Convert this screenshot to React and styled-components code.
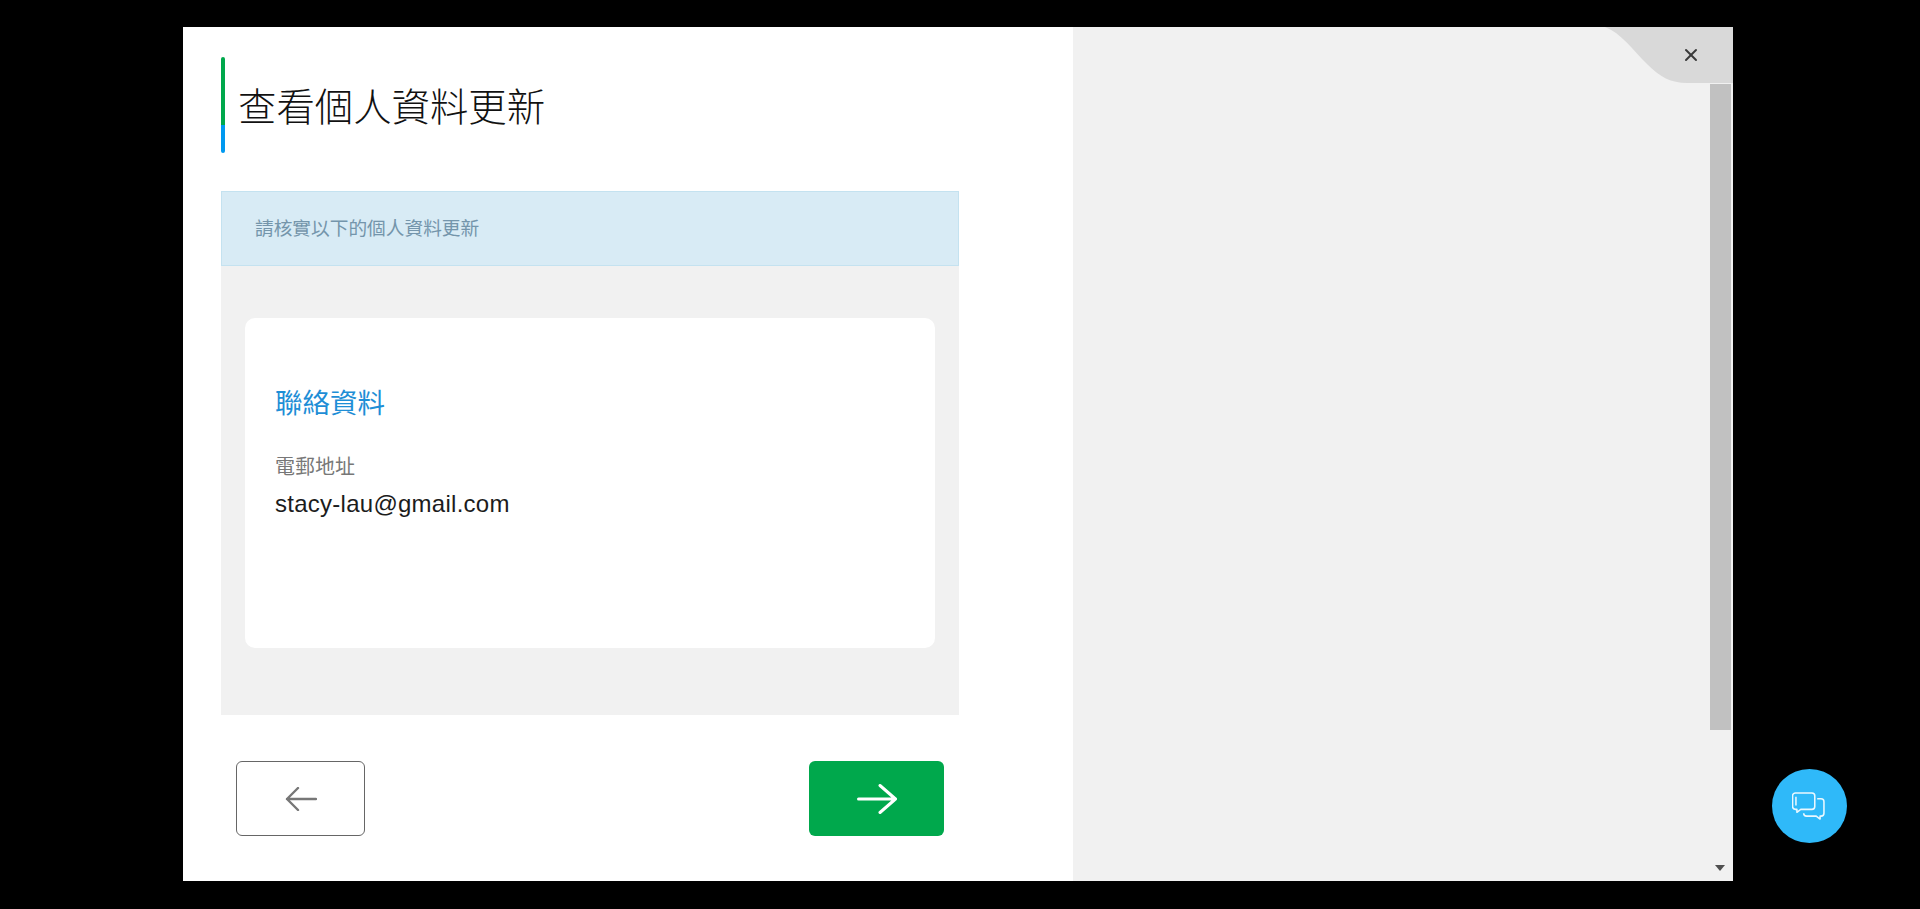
import styled, { createGlobalStyle } from 'styled-components';
import { X } from 'lucide-react';

const GlobalStyle = createGlobalStyle`
    html, body {
        margin: 0;
        padding: 0;
        height: 100%;
        background: #000;
        overflow: hidden;
        font-family: "Liberation Sans", "Noto Sans CJK TC", sans-serif;
    }
`;

const Overlay = styled.div`
    height: 909px;
    padding: 27px 187px 28px 183px;
    box-sizing: border-box;
    position: relative;
`;

const Modal = styled.div`
    height: 854px;
    display: flex;
    position: relative;
    background: #f1f1f1;
`;

const LeftPane = styled.main`
    width: 890px;
    background: #fff;
    padding: 30px 114px 0 38px;
    box-sizing: border-box;
`;

const RightPane = styled.aside`
    flex: 1;
    display: flex;
    justify-content: flex-end;
    padding-right: 2px;
`;

const TitleRow = styled.header`
    height: 96px;
    display: flex;
    align-items: center;
    padding: 0 0 3px 17px;
    box-sizing: border-box;
    position: relative;
    margin-bottom: 38px;
    &::before {
        content: "";
        position: absolute;
        left: 0;
        top: 0;
        width: 4px;
        height: 96px;
        border-radius: 2px;
        background: linear-gradient(#00a84c 0 68px, #0099f0 68px);
    }
`;

const Title = styled.h1`
    margin: 0;
    font-size: 38.4px;
    font-weight: 300;
    color: #111;
`;

const Notice = styled.div`
    height: 75px;
    box-sizing: border-box;
    background: #d8ebf5;
    border: 1px solid #c4e2f0;
    padding: 0 0 4px 33px;
    display: flex;
    align-items: center;
    font-size: 18.7px;
    color: #7495ab;
`;

const GreyPanel = styled.section`
    height: 449px;
    box-sizing: border-box;
    background: #f1f1f1;
    padding: 52px 24px 0;
`;

const Card = styled.div`
    height: 330px;
    box-sizing: border-box;
    background: #fff;
    border-radius: 10px;
    padding: 66px 30px 0;
`;

const CardTitle = styled.h2`
    margin: 0 0 28px;
    font-size: 27.5px;
    line-height: 40px;
    font-weight: 400;
    color: #1e8ed6;
`;

const FieldLabel = styled.div`
    font-size: 20px;
    line-height: 30px;
    color: #777;
`;

const FieldValue = styled.div`
    font-size: 24px;
    line-height: 44px;
    letter-spacing: 0.26px;
    color: #1c1c1c;
`;

const Actions = styled.div`
    display: flex;
    justify-content: space-between;
    padding: 46px 15px 0;
`;

const NavButton = styled.button`
    width: ${p => (p.$primary ? '135px' : '129px')};
    height: 75px;
    box-sizing: border-box;
    padding: 0;
    display: flex;
    align-items: center;
    justify-content: center;
    border-radius: 6px;
    border: ${p => (p.$primary ? 'none' : '1px solid #666')};
    background: ${p => (p.$primary ? '#00a84c' : '#fff')};
    color: ${p => (p.$primary ? '#fff' : '#777')};
`;

const Scrollbar = styled.div`
    width: 21px;
    position: relative;
`;

const Thumb = styled.div`
    height: 646px;
    margin-top: 57px;
    background: #c1c1c1;
`;

const ScrollArrow = styled.div`
    position: absolute;
    left: 5px;
    bottom: 10px;
    width: 0;
    height: 0;
    border-left: 5.5px solid transparent;
    border-right: 5.5px solid transparent;
    border-top: 6px solid #505050;
`;

const CloseCorner = styled.div`
    position: absolute;
    top: 0;
    right: 0;
    width: 128px;
    height: 56px;
    color: #3a3a3a;
    display: flex;
    align-items: center;
    justify-content: flex-end;
    padding-right: 32px;
    box-sizing: border-box;
    & > svg:first-child {
        position: absolute;
        inset: 0;
    }
    & > svg:last-child {
        position: relative;
    }
`;

const ChatButton = styled.button`
    position: absolute;
    left: 1772px;
    top: 769px;
    width: 75px;
    height: 74px;
    border-radius: 50%;
    border: none;
    padding: 0 2px 0 0;
    background: #2fb9f9;
    display: flex;
    align-items: center;
    justify-content: center;
`;

function ArrowLeft() {
    return (
        <svg width="32" height="24" viewBox="0 0 32 24" fill="none" stroke="currentColor" strokeWidth="2.4" strokeLinecap="round" strokeLinejoin="round">
            <path d="M31 12H2M13 1L2 12l11 11" />
        </svg>
    );
}

function ArrowRight() {
    return (
        <svg width="40" height="30" viewBox="0 0 40 30" fill="none" stroke="currentColor" strokeWidth="3" strokeLinecap="round" strokeLinejoin="round">
            <path d="M1.5 15h37M23 1.5L38.500 15 23 28.500" />
        </svg>
    );
}

function ChatIcon() {
    return (
        <svg width="33" height="28" viewBox="0 0 34 29" fill="none" stroke="#fff" strokeOpacity="0.9" strokeWidth="1.6" strokeLinejoin="round">
            <path d="M3.500 1h17a3 3 0 0 1 3 3v11a3 3 0 0 1-3 3H9l-4 3v-3H3.500a3 3 0 0 1-3-3V4a3 3 0 0 1 3-3z" />
            <path d="M26 7h4a3 3 0 0 1 3 3v12a3 3 0 0 1-3 3h-1v3l-4-3H15a3 3 0 0 1-3-3" />
            <path d="M4 5v9" />
        </svg>
    );
}

export default function App() {
    return (
        <>
            <GlobalStyle />
            <Overlay>
                <Modal>
                    <LeftPane>
                        <TitleRow>
                            <Title>查看個人資料更新</Title>
                        </TitleRow>
                        <Notice>請核實以下的個人資料更新</Notice>
                        <GreyPanel>
                            <Card>
                                <CardTitle>聯絡資料</CardTitle>
                                <FieldLabel>電郵地址</FieldLabel>
                                <FieldValue>stacy-lau@gmail.com</FieldValue>
                            </Card>
                        </GreyPanel>
                        <Actions>
                            <NavButton aria-label="back"><ArrowLeft /></NavButton>
                            <NavButton $primary aria-label="next"><ArrowRight /></NavButton>
                        </Actions>
                    </LeftPane>
                    <RightPane>
                        <Scrollbar>
                            <Thumb />
                            <ScrollArrow />
                        </Scrollbar>
                    </RightPane>
                    <CloseCorner>
                        <svg width="128" height="56" viewBox="0 0 128 56">
                            <path d="M0 0h128v56H82C66 56 55 50 42 37 28 23 16 6 0 0z" fill="#d9d9d9" />
                        </svg>
                        <X size={20} strokeWidth={2.4} />
                    </CloseCorner>
                </Modal>
                <ChatButton aria-label="chat"><ChatIcon /></ChatButton>
            </Overlay>
        </>
    );
}
